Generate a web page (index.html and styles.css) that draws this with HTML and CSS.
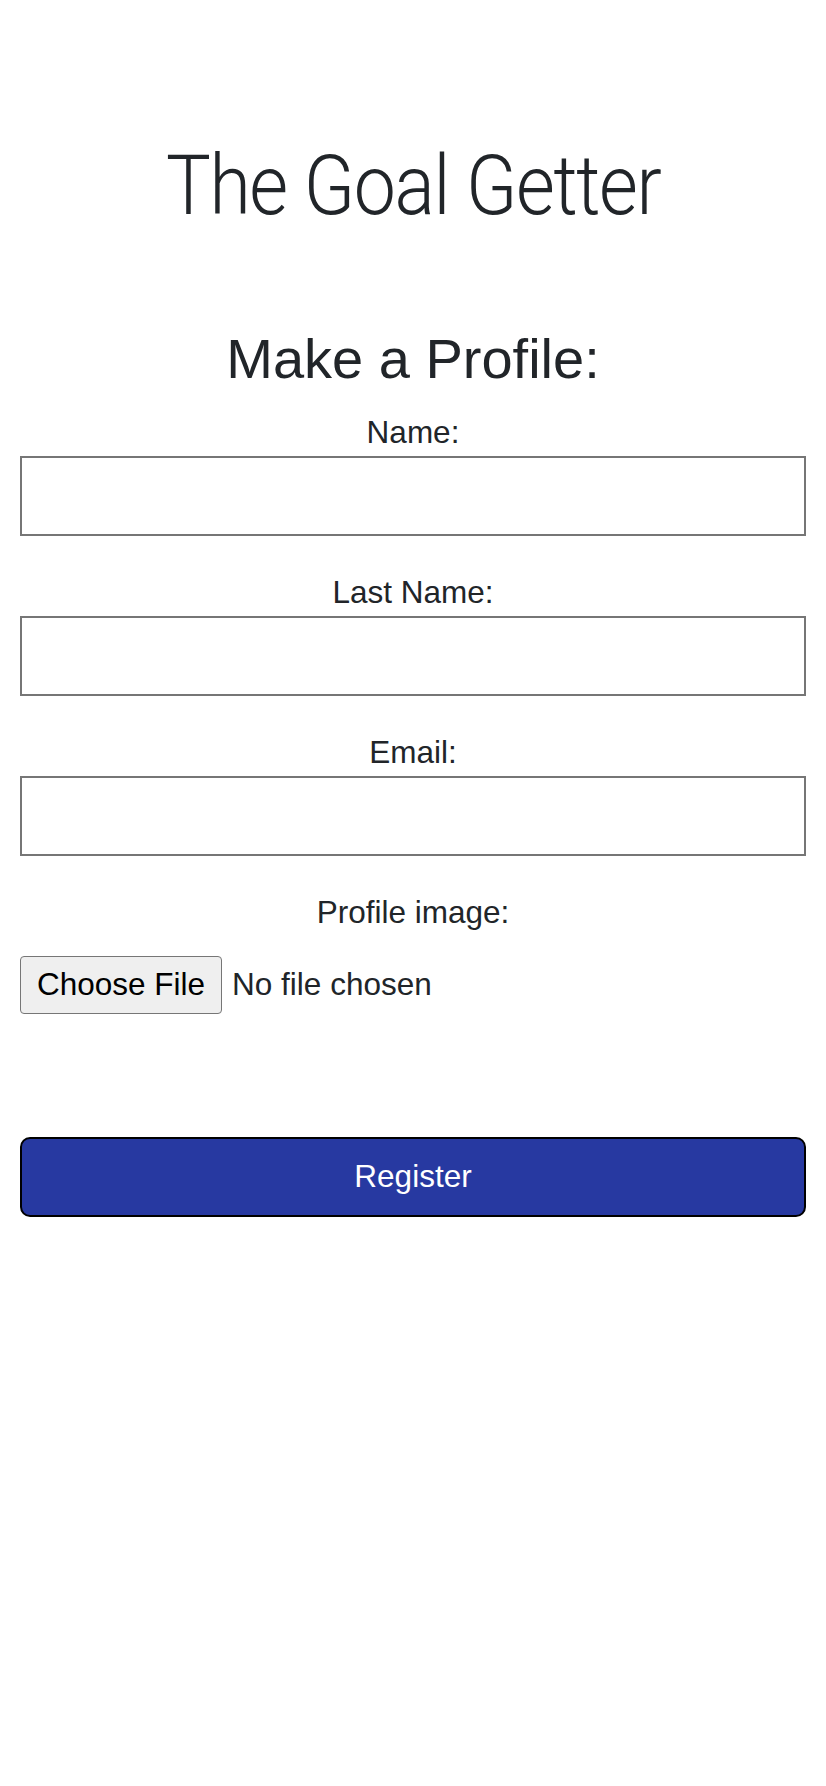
FILE: index.html
```html
<!DOCTYPE html>
<html lang="en">
<head>
<meta charset="utf-8">
<title>The Goal Getter</title>
<link rel="stylesheet" href="styles.css">
</head>
<body>
<main class="page">
  <h1 class="brand"><span class="brand-text">The Goal Getter</span></h1>
  <form class="profile-form">
    <h2 class="form-title">Make a Profile:</h2>
    <div class="field">
      <label class="field-label" for="name">Name:</label>
      <input class="field-input" id="name" type="text">
    </div>
    <div class="field">
      <label class="field-label" for="last-name">Last Name:</label>
      <input class="field-input" id="last-name" type="text">
    </div>
    <div class="field">
      <label class="field-label" for="email">Email:</label>
      <input class="field-input" id="email" type="email">
    </div>
    <div class="field field-file">
      <span class="field-label">Profile image:</span>
      <div class="file-picker">
        <button type="button" class="file-button">Choose File</button>
        <span class="file-status">No file chosen</span>
      </div>
    </div>
    <button type="submit" class="submit-button">Register</button>
  </form>
</main>
</body>
</html>
```

FILE: styles.css
```css
* {
  box-sizing: border-box;
}

html, body {
  margin: 0;
  padding: 0;
  background: #ffffff;
}

body {
  font-family: "Liberation Sans", Arial, sans-serif;
  color: #212529;
}

.page {
  padding: 136px 20px 0 20px;
}

.brand {
  margin: 0;
  font-family: Roboto, "Open Sans", sans-serif;
  font-weight: 300;
  font-size: 83px;
  line-height: 1.2;
  text-align: center;
  color: #212529;
}

.brand-text {
  display: inline-block;
  letter-spacing: -1.5px;
  transform: scaleX(0.905);
}

.profile-form {
  display: flex;
  flex-direction: column;
  margin-top: 89px;
}

.form-title {
  margin: 0 0 22px 0;
  font-size: 56px;
  font-weight: 400;
  line-height: 1.2;
  text-align: center;
}

.field {
  display: flex;
  flex-direction: column;
  margin-bottom: 38px;
}

.field-label {
  display: block;
  font-size: 31.5px;
  line-height: 36px;
  text-align: center;
  margin-bottom: 6px;
}

.field-input {
  display: block;
  width: 100%;
  height: 80px;
  margin: 0;
  padding: 0 12px;
  border: 2px solid #767676;
  border-radius: 0;
  background: #ffffff;
  font-family: "Liberation Sans", Arial, sans-serif;
  font-size: 31.5px;
}

.field-file .field-label {
  margin-bottom: 26px;
}

.file-picker {
  display: flex;
  align-items: center;
  gap: 10px;
}

.file-button {
  height: 58px;
  margin: 0;
  padding: 0 16px;
  border: 1px solid #767676;
  border-radius: 4px;
  background: #efefef;
  color: #000000;
  font-family: "Liberation Sans", Arial, sans-serif;
  font-size: 31.5px;
  line-height: 1;
}

.file-status {
  font-size: 31.5px;
  color: #212529;
}

.submit-button {
  display: block;
  width: 100%;
  height: 80px;
  margin: 85px 0 0 0;
  border: 2px solid #000000;
  border-radius: 10px;
  background: #2739a1;
  color: #ffffff;
  font-family: "Liberation Sans", Arial, sans-serif;
  font-size: 31.5px;
}
```
